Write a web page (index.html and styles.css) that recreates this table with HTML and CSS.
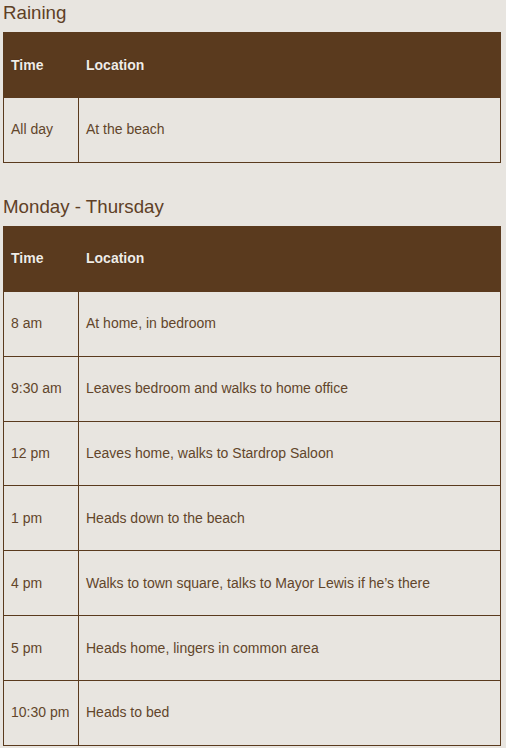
FILE: index.html
```html
<!DOCTYPE html>
<html>
<head>
<meta charset="utf-8">
<link rel="stylesheet" href="styles.css">
</head>
<body>
<section class="section">
  <h3 class="title">Raining</h3>
  <table class="schedule">
    <colgroup><col class="c-time"><col></colgroup>
    <thead><tr><th>Time</th><th>Location</th></tr></thead>
    <tbody>
      <tr><td>All day</td><td>At the beach</td></tr>
    </tbody>
  </table>
</section>
<section class="section">
  <h3 class="title">Monday - Thursday</h3>
  <table class="schedule">
    <colgroup><col class="c-time"><col></colgroup>
    <thead><tr><th>Time</th><th>Location</th></tr></thead>
    <tbody>
      <tr><td>8 am</td><td>At home, in bedroom</td></tr>
      <tr><td>9:30 am</td><td>Leaves bedroom and walks to home office</td></tr>
      <tr><td>12 pm</td><td>Leaves home, walks to Stardrop Saloon</td></tr>
      <tr><td>1 pm</td><td>Heads down to the beach</td></tr>
      <tr><td>4 pm</td><td>Walks to town square, talks to Mayor Lewis if he’s there</td></tr>
      <tr><td>5 pm</td><td>Heads home, lingers in common area</td></tr>
      <tr><td>10:30 pm</td><td>Heads to bed</td></tr>
    </tbody>
  </table>
</section>
</body>
</html>
```
FILE: styles.css
```css
html, body {
  margin: 0;
  padding: 0;
  background: #e8e5e0;
}
body {
  padding: 0 5px 0 3px;
  font-family: "Liberation Sans", Arial, sans-serif;
  color: #5e4026;
}
.section {
  margin-bottom: 31px;
}
.title {
  margin: 0 0 7px 0;
  padding-top: 1px;
  font-size: 18.72px;
  line-height: 24px;
  font-weight: normal;
  color: #5e4026;
}
.schedule {
  width: 498px;
  border-collapse: collapse;
  table-layout: fixed;
  font-size: 14px;
}
.c-time {
  width: 75px;
}
.schedule th,
.schedule td {
  height: 65px;
  padding: 0 7px 1px 7px;
  text-align: left;
  line-height: 16px;
  box-sizing: border-box;
}
.schedule td {
  height: 64.86px;
}
.schedule th {
  background: #5a3a1e;
  color: #f1ece6;
  font-weight: bold;
  border: 1px solid #5a3a1e;
  text-shadow: 0 0 1px rgba(0,0,0,0.4);
}
.schedule td {
  border: 1px solid #5a3a1e;
  color: #62452b;
}
```
